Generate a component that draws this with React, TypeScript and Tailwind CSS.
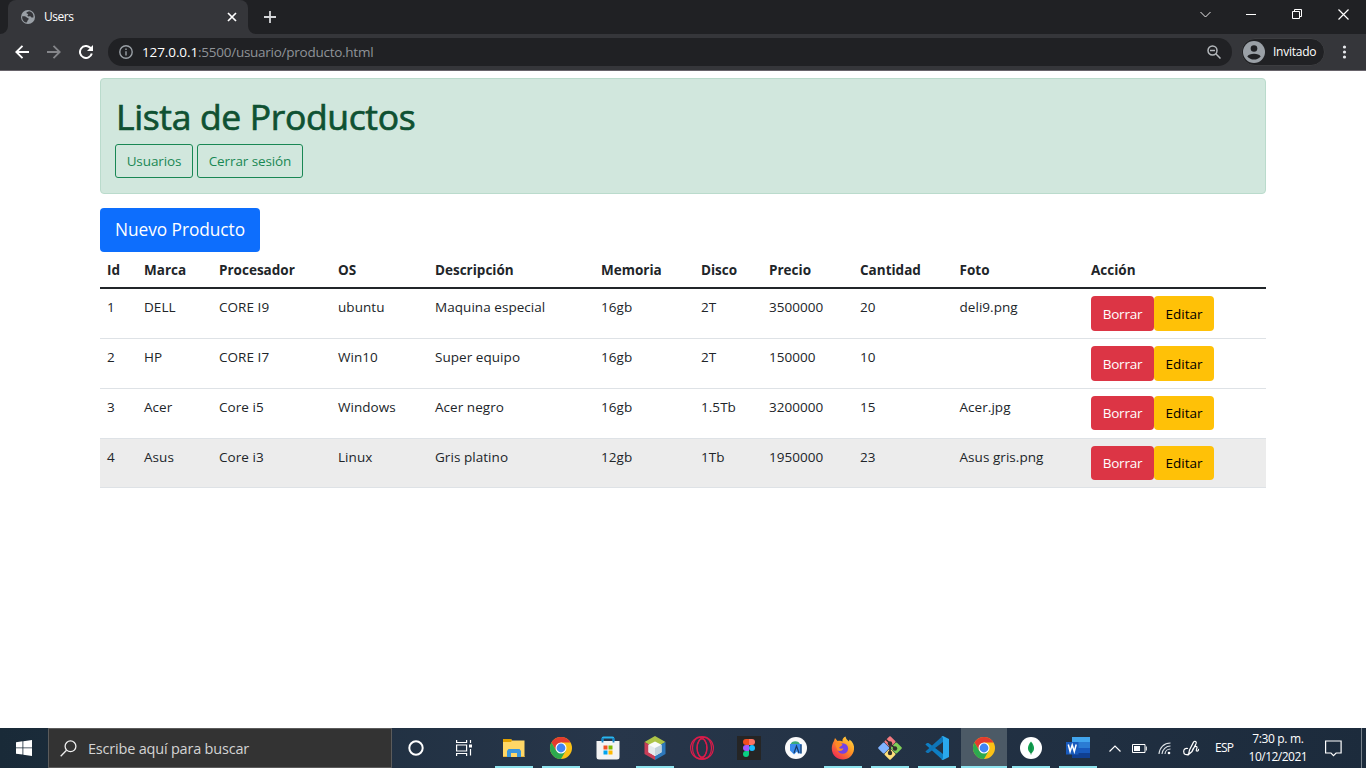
import type { ReactNode } from "react";

type Product = {
  id: number;
  brand: string;
  cpu: string;
  os: string;
  description: string;
  memory: string;
  disk: string;
  price: string;
  quantity: string;
  photo: string;
  row: string;
  button: string;
};

const products: Product[] = [
  { id: 1, brand: "DELL", cpu: "CORE I9", os: "ubuntu", description: "Maquina especial", memory: "16gb", disk: "2T", price: "3500000", quantity: "20", photo: "deli9.png", row: "h-[50px]", button: "h-[35px] pt-px" },
  { id: 2, brand: "HP", cpu: "CORE I7", os: "Win10", description: "Super equipo", memory: "16gb", disk: "2T", price: "150000", quantity: "10", photo: "", row: "h-[50px]", button: "h-[35px] pt-px" },
  { id: 3, brand: "Acer", cpu: "Core i5", os: "Windows", description: "Acer negro", memory: "16gb", disk: "1.5Tb", price: "3200000", quantity: "15", photo: "Acer.jpg", row: "h-[50px]", button: "h-[34px]" },
  { id: 4, brand: "Asus", cpu: "Core i3", os: "Linux", description: "Gris platino", memory: "12gb", disk: "1Tb", price: "1950000", quantity: "23", photo: "Asus gris.png", row: "h-[49px] bg-[#ececec]", button: "h-[34px]" },
];

const headings = ["Id", "Marca", "Procesador", "OS", "Descripción", "Memoria", "Disco", "Precio", "Cantidad", "Foto", "Acción"];

const columns = "grid grid-cols-[37px_75px_119px_97px_166px_100px_68px_91px_99.5px_131.5px_182px]";

function BrowserTabs() {
  return (
    <div className="flex h-[34px] bg-[#202124] text-white">
      <svg className="mt-[26px] size-2 shrink-0" viewBox="0 0 8 8" fill="#35363a">
        <path d="M8 0v8H0a8 8 0 0 0 8-8z" />
      </svg>
      <div className="flex h-[34px] w-[240px] items-center rounded-t-lg bg-[#35363a] pl-3 pr-[11px]">
        <svg className="size-4" viewBox="0 0 16 16">
          <circle cx="8" cy="8" r="7" fill="#9aa0a6" />
          <path d="M2.200 7.300c1.300-.1 2.300-.2 3.300.3 1.100.5.9 1.100 2.100 1.300 1.400.2 1.400 1 .6 1.900-.7.800-.6 1.400-1.300 2.300-.6.400-.6.700-1.200.5C3 12.600 1.800 9.800 2.200 7.300zM9 2.300c-1.300.6-3 1-2.500 1.900.4.700 1.700.3 1.700 1.100 0 .8-1.300 1-.6 1.700.9.900 2.500-.2 3.200.7.600.8 1.200 1 2.600.7C14 5.400 12 2.700 9 2.300z" fill="#35363a" />
        </svg>
        <span className="ml-2 text-[12px] tracking-[-0.45px]">Users</span>
        <svg className="ml-auto size-[10px]" viewBox="0 0 10 10" stroke="#fff" strokeWidth="1.7">
          <path d="M1 1l8 8M9 1l-8 8" />
        </svg>
      </div>
      <svg className="mt-[26px] size-2 shrink-0" viewBox="0 0 8 8" fill="#35363a">
        <path d="M0 0v8h8a8 8 0 0 1-8-8z" />
      </svg>
      <svg className="ml-2 mt-[11px] size-3" viewBox="0 0 12 12" stroke="#d5d7da" strokeWidth="1.8">
        <path d="M6 0v12M0 6h12" />
      </svg>
      <div className="ml-auto flex h-7 items-center">
        <svg className="mr-[35px] h-[7px] w-[11px]" viewBox="0 0 11 7" fill="none" stroke="#e8e8e8" strokeWidth="1">
          <path d="M.5 1l5 5 5-5" />
        </svg>
        <svg className="mr-9 h-px w-[10px]" viewBox="0 0 10 1"><rect width="10" height="1" fill="#fff" /></svg>
        <svg className="mr-9 size-[10px]" viewBox="0 0 10 10" fill="none" stroke="#fff">
          <path d="M.5 2.500h7v7h-7zM2.500 2.500v-2h7v7h-2" />
        </svg>
        <svg className="mr-[17px] size-[11px]" viewBox="0 0 11 11" stroke="#fff" strokeWidth="1.2">
          <path d="M.5.5l10 10M10.500.5l-10 10" />
        </svg>
      </div>
    </div>
  );
}

function BrowserToolbar() {
  return (
    <div className="flex h-[37px] items-center border-b border-[#67636a] bg-[#35363a]">
      <svg className="ml-[15px] size-[14px]" viewBox="0 0 14 14" fill="none" stroke="#fff" strokeWidth="1.9">
        <path d="M14 7H1.500M7.500 .8L1.300 7l6.200 6.200" />
      </svg>
      <svg className="ml-[18px] size-[14px]" viewBox="0 0 14 14" fill="none" stroke="#85868a" strokeWidth="1.8">
        <path d="M0 7h12.500M6.500.8L12.700 7l-6.200 6.200" />
      </svg>
      <svg className="ml-[18px] size-[14px]" viewBox="0 0 14 14" fill="none">
        <path d="M12.800 8.500A6 6 0 1 1 11.300 2.800L12.500 4" stroke="#fff" strokeWidth="2" />
        <path d="M14 0v6H8z" fill="#fff" />
      </svg>
      <div className="ml-[15px] flex h-7 w-[1124px] items-center rounded-full bg-[#202124] pl-[11px] pr-[11px]">
        <svg className="size-[14px]" viewBox="0 0 14 14" fill="none" stroke="#9aa0a6" strokeWidth="1.4">
          <circle cx="7" cy="7" r="6.200" />
          <path d="M7 6.300v4.200M7 3.500v1.600" />
        </svg>
        <span className="ml-[9px] text-[13.5px] tracking-[-0.26px] text-[#8f9398]">
          <span className="tracking-[-0.1px] text-white">127.0.0.1</span>:5500/usuario/producto.html
        </span>
        <svg className="ml-auto size-[14px]" viewBox="0 0 14 14" fill="none" stroke="#b4b8bc" strokeWidth="1.5">
          <circle cx="5.500" cy="5.500" r="4.500" />
          <path d="M3 5.500h5M8.800 8.800l4.700 4.700" />
        </svg>
      </div>
      <div className="ml-[9px] flex h-7 w-[84px] items-center rounded-full border border-[#3c3d40] bg-[#202124] pl-px text-[12px] text-white">
        <svg className="size-[22px] shrink-0" viewBox="0 0 22 22">
          <circle cx="11" cy="11" r="11" fill="#9aa0a6" />
          <circle cx="11" cy="7.500" r="3.300" fill="#202124" />
          <path d="M4.300 15.500C6 11.800 16 11.800 17.700 15.500 14.500 19.600 7.500 19.600 4.300 15.500z" fill="#202124" />
        </svg>
        <span className="ml-2 tracking-[-0.25px]">Invitado</span>
      </div>
      <svg className="ml-[17px] h-[14px] w-[5px]" viewBox="0 0 5 14" fill="#e8eaed">
        <circle cx="2.500" cy="2" r="1.600" /><circle cx="2.500" cy="7" r="1.600" /><circle cx="2.500" cy="12" r="1.600" />
      </svg>
    </div>
  );
}

function ProductPage() {
  return (
    <main className="flex h-[657px] flex-col bg-white px-[100px] pt-[7px] text-[#212529]">
      <div className="h-[116px] w-[1166px] rounded-[4px] border border-[#badbcc] bg-[#d1e7dd] px-[14px]">
        <h1 className="pl-px pt-[16px] text-[35.5px] font-medium leading-[42px] tracking-[-0.35px] text-[#0f5132] [-webkit-text-stroke:0.7px_#0f5132]">Lista de Productos</h1>
        <div className="mt-[7px] flex gap-1 text-[13.5px] text-[#198754]">
          <button className="h-[34px] w-[78px] rounded-[3px] border border-[#198754] pt-px tracking-[-0.1px]">Usuarios</button>
          <button className="h-[34px] w-[106px] rounded-[3px] border border-[#198754] pt-px tracking-[-0.1px]">Cerrar sesión</button>
        </div>
      </div>
      <button className="mt-[14px] h-[44px] w-[160px] shrink-0 rounded-[4px] bg-[#0d6efd] pb-px text-[17.3px] tracking-[-0.05px] text-white">Nuevo Producto</button>
      <div className="w-[1166px] text-[13.5px]">
        <div className={`${columns} h-[37px] border-b-2 border-[#212529] font-bold`}>
          {headings.map((h) => (
            <div key={h} className="pl-[7px] pt-[8px] leading-[21px]">{h}</div>
          ))}
        </div>
        {products.map((p) => (
          <div key={p.id} className={`${columns} ${p.row} border-b border-[#dee2e6]`}>
            {[p.id, p.brand, p.cpu, p.os, p.description, p.memory, p.disk, p.price, p.quantity, p.photo].map((value, i) => (
              <div key={i} className="pl-[7px] pt-[8px] leading-[21px] tracking-[0.05px]">{value}</div>
            ))}
            <div className="flex pl-[7px] pt-[7px]">
              <button className={`${p.button} w-[63px] rounded-[4px] bg-[#dc3545] tracking-[-0.2px] text-white`}>Borrar</button>
              <button className={`${p.button} w-[60px] rounded-[4px] bg-[#ffc107] text-black`}>Editar</button>
            </div>
          </div>
        ))}
      </div>
    </main>
  );
}

function ChromeIcon() {
  return (
    <svg className="size-6" viewBox="0 0 24 24">
      <circle cx="12" cy="12" r="11" fill="#fbc116" />
      <path d="M2.470 6.500A11 11 0 0 1 21.530 6.500L12 6.500 7.240 14.750z" fill="#e33b2e" />
      <path d="M2.470 6.500A11 11 0 0 0 12 23l4.760-8.250H7.240z" fill="#2da94f" />
      <circle cx="12" cy="12" r="5.500" fill="#fff" />
      <circle cx="12" cy="12" r="4.400" fill="#4285f4" />
    </svg>
  );
}

function ExplorerIcon() {
  return (
    <svg className="size-6" viewBox="0 0 24 24">
      <path d="M1 3h8l1 1.500h12.500V21H1z" fill="#ffd766" />
      <path d="M1 3h8l1 1.500L9 6H1z" fill="#e2a100" />
      <path d="M5 21v-6l1.500-2h11l1.500 2v6h-4v-4H9v4z" fill="#3a96dd" />
      <path d="M1 20h4v1H1zM19 20h3.500v1H19z" fill="#eab63d" />
    </svg>
  );
}

function StoreIcon() {
  return (
    <svg className="size-6" viewBox="0 0 24 24">
      <path d="M6.500 6V2.500q0-1 1-1h9q1 0 1 1V6" fill="none" stroke="#29b6f0" strokeWidth="1.8" />
      <path d="M.5 5h23v16q0 2.500-2.500 2.500H3Q.5 23.500.5 21z" fill="#f3f3f3" />
      <path d="M6.500 2v4.500M17.500 2v4.500" stroke="#1687c9" strokeWidth="1.8" />
      <path d="M7.500 9.500h4v4h-4z" fill="#f25022" /><path d="M12.500 9.500h4v4h-4z" fill="#7fba00" />
      <path d="M7.500 14.500h4v4h-4z" fill="#00a4ef" /><path d="M12.500 14.500h4v4h-4z" fill="#ffb900" />
    </svg>
  );
}

function NetBeansIcon() {
  return (
    <svg className="size-6" viewBox="0 0 24 24">
      <path d="M12 0l10.500 6L12 12 1.500 6z" fill="#adc447" />
      <path d="M1.500 6L12 12v12L1.500 18z" fill="#c83d57" />
      <path d="M22.500 6L12 12v12l10.500-6z" fill="#2d78bc" />
      <path d="M12 5.500l6.500 3.300v7.500L12 20l-6.500-3.700V8.800z" fill="#f9fbfb" />
      <path d="M12 12l6.500-3.200v7.500L12 20z" fill="#c3d3dc" /><path d="M12 12L5.500 8.800v7.500L12 20z" fill="#e4eaed" />
    </svg>
  );
}

function OperaIcon() {
  return (
    <svg className="size-6" viewBox="0 0 24 24" fill="none" stroke="#d91c4a" strokeWidth="1.2">
      <ellipse cx="12" cy="12" rx="11.400" ry="11.300" />
      <ellipse cx="9.800" cy="12" rx="7.300" ry="10.700" />
      <ellipse cx="14.200" cy="12" rx="7.300" ry="10.700" />
      <ellipse cx="12" cy="12" rx="4.800" ry="9" />
    </svg>
  );
}

function FigmaIcon() {
  return (
    <svg className="size-6" viewBox="0 0 24 24">
      <path d="M0 0h24v24H0z" fill="#252525" />
      <path d="M12 3H9a3 3 0 0 0 0 6h3z" fill="#f24e1e" /><path d="M12 3h3a3 3 0 0 1 0 6h-3z" fill="#ff7262" />
      <path d="M12 9H9a3 3 0 0 0 0 6h3z" fill="#a259ff" /><circle cx="15" cy="12" r="3" fill="#1abcfe" />
      <path d="M12 15H9a3 3 0 1 0 3 3z" fill="#0acf83" />
    </svg>
  );
}

function AndroidStudioIcon() {
  return (
    <svg className="size-6" viewBox="0 0 24 24">
      <circle cx="12" cy="12" r="11" fill="#fafafa" />
      <path d="M6.500 8.500c.5-4.500 9-4.500 9.500 0z" fill="#3aaa7b" />
      <path d="M6 8h11.500v9.500H14l-1-2-3 3-4-4z" fill="#3c8ceb" />
      <path d="M10 17l2.500-7 2.500 7M17 8.500v9" fill="none" stroke="#173b66" strokeWidth="1.2" />
    </svg>
  );
}

function FirefoxIcon() {
  return (
    <svg className="size-6" viewBox="0 0 24 24">
      <defs>
        <linearGradient id="fox" x1="1" y1="0" x2="0.2" y2="1">
          <stop offset="0" stopColor="#ffe44d" /><stop offset=".45" stopColor="#ff9a22" /><stop offset="1" stopColor="#ef2455" />
        </linearGradient>
      </defs>
      <path d="M3 5l1-3 2.500 3c2-.5 4 0 5 .5C11 3 12.500 1.500 14.500.5c.5 2.500 2 3.500 3.500 5l.5-2C22 6 23.500 9.500 23 13.500 22.300 19.500 17.500 23.500 12 23.500S1 19.500.8 13C.7 10 1.500 7 3 5z" fill="url(#fox)" />
      <circle cx="11.800" cy="12.500" r="5.300" fill="#7542e5" />
      <path d="M4 8c2-2 5-1.500 7.500.5-.5 2-3 1.500-3.500 3.500 1.500 1 3 .5 4.500.5-1 2.500-4 3-6 2z" fill="#ff8a25" />
    </svg>
  );
}

function GitIcon() {
  return (
    <svg className="size-6" viewBox="0 0 24 24">
      <g strokeLinejoin="round" strokeWidth="2">
        <path d="M12 1.200l4.500 4.500L12 10.200 7.500 5.700z" fill="#f47a80" stroke="#f47a80" />
        <path d="M5.700 7.500l4.500 4.500-4.500 4.500L1.200 12z" fill="#80b3ff" stroke="#80b3ff" />
        <path d="M18.300 7.500l4.500 4.500-4.500 4.500-4.500-4.500z" fill="#80cf58" stroke="#80cf58" />
        <path d="M12 13.800l4.500 4.500-4.500 4.500-4.500-4.500z" fill="#ffe07a" stroke="#ffe07a" />
      </g>
      <path d="M8 3.500l4 4V17M12 7.500l5 5" fill="none" stroke="#302d2d" strokeWidth="1.7" />
      <circle cx="12" cy="7.500" r="2.200" fill="#302d2d" /><circle cx="12" cy="17" r="2.200" fill="#302d2d" /><circle cx="17" cy="12.500" r="2.200" fill="#302d2d" />
    </svg>
  );
}

function CodeIcon() {
  return (
    <svg className="size-6" viewBox="0 0 24 24">
      <path d="M.4 8.500L2 7h1.500L18 18v5.500L16.500 23z" fill="#0e7fc4" />
      <path d="M.4 15.500L2 17h1.500L18 6V.5L16.500 1z" fill="#0f75b8" />
      <path d="M16 .8L18 0l6 3v18l-6 3-2-.8q2 .4 2-1.700v-19q0-2.100-2-1.700z" fill="#2aa8ed" />
    </svg>
  );
}

function MongoIcon() {
  return (
    <svg className="size-6" viewBox="0 0 24 24">
      <circle cx="12" cy="12" r="11" fill="#fff" />
      <path d="M12 5.500c4.300 5 3.800 9.500 0 12-3.800-2.500-4.300-7 0-12z" fill="#13a150" />
      <path d="M12 7v11.500" stroke="#08733a" strokeWidth=".7" />
    </svg>
  );
}

function WordIcon() {
  return (
    <svg className="size-6" viewBox="0 0 24 24">
      <path d="M6 1h18v6H6z" fill="#41a5ee" /><path d="M6 6h18v6H6z" fill="#2b7cd3" />
      <path d="M6 12h18v5H6z" fill="#185abd" /><path d="M6 17h18v5H6z" fill="#103f91" />
      <path d="M0 6h12.500v12.500H0z" fill="#185abd" />
      <path d="M2.300 8.500l1.800 7 2.100-6.500 2.100 6.500 1.900-7" fill="none" stroke="#fff" strokeWidth="1.5" />
    </svg>
  );
}

type App = { name: string; icon: ReactNode; open?: boolean; active?: boolean };

const apps: App[] = [
  { name: "explorer", icon: <ExplorerIcon />, open: true },
  { name: "chrome", icon: <ChromeIcon />, open: true },
  { name: "store", icon: <StoreIcon /> },
  { name: "netbeans", icon: <NetBeansIcon />, open: true },
  { name: "opera", icon: <OperaIcon /> },
  { name: "figma", icon: <FigmaIcon /> },
  { name: "android", icon: <AndroidStudioIcon /> },
  { name: "firefox", icon: <FirefoxIcon />, open: true },
  { name: "git", icon: <GitIcon />, open: true },
  { name: "code", icon: <CodeIcon />, open: true },
  { name: "chrome-guest", icon: <ChromeIcon />, open: true, active: true },
  { name: "mongo", icon: <MongoIcon />, open: true },
  { name: "word", icon: <WordIcon />, open: true },
];

function Taskbar() {
  return (
    <footer className="flex h-10 bg-linear-to-r from-[#192a38] via-[#27364a] via-45% to-[#1c2b3c] text-white">
      <div className="flex w-12 items-center justify-center">
        <svg className="size-4" viewBox="0 0 16 16" fill="#fff">
          <path d="M0 2.200L6.500 1.300v6.200H0zM7.300 1.200L16 0v7.500H7.300zM0 8.300h6.500v6.300L0 13.700zM7.300 8.300H16V16l-8.700-1.300z" />
        </svg>
      </div>
      <div className="flex w-[344px] items-center border border-[#5b5b5b] bg-[#333333] pl-[11px]">
        <svg className="size-[17px]" viewBox="0 0 17 17" fill="none" stroke="#eee" strokeWidth="1.3">
          <circle cx="10.500" cy="6.300" r="5.400" /><path d="M6.500 10.200L.7 16.200" />
        </svg>
        <span className="ml-[11px] pt-px text-[14.5px] tracking-[-0.2px] text-[#d4d4d4]">Escribe aquí para buscar</span>
      </div>
      <div className="flex w-12 items-center justify-center">
        <svg className="size-4" viewBox="0 0 16 16" fill="none" stroke="#fff" strokeWidth="2"><circle cx="8" cy="8" r="6.700" /></svg>
      </div>
      <div className="flex w-[51px] items-center pl-4">
        <svg className="size-4" viewBox="0 0 16 16" fill="none" stroke="#fff" strokeWidth="1.2">
          <path d="M.6 0v2.500h10V0M.6 16v-2.500h10V16M.6 5h10v6h-10zM14.500 0v3M14.500 9v6.500" /><path d="M13 4.500h3v3h-3z" fill="#fff" stroke="none" />
        </svg>
      </div>
      {apps.map((app) => (
        <div key={app.name} className={`flex w-[47px] flex-col items-start ${app.active ? "bg-linear-to-r from-[#4c5a66] from-[46px] to-transparent to-[46px]" : ""}`}>
          <div className="flex h-[38px] items-center pl-[11px] pt-px">{app.icon}</div>
          {app.open && <div className={`h-[2px] bg-[#8ee3ee] ${app.active ? "w-[46px]" : "ml-1 w-[38px]"}`} />}
        </div>
      ))}
      <div className="flex flex-1 items-center pl-[7px]">
        <svg className="h-[7px] w-3" viewBox="0 0 12 7" fill="none" stroke="#fff" strokeWidth="1.2"><path d="M.5 6.500L6 1l5.500 5.500" /></svg>
        <svg className="ml-[11px] h-[9px] w-[15px]" viewBox="0 0 15 9" fill="none" stroke="#fff">
          <path d="M.5.5h12.500v8H.5zM14.300 2.500v4" /><path d="M2 2h6v5H2z" fill="#fff" stroke="none" />
        </svg>
        <svg className="ml-[11px] size-[13px]" viewBox="0 0 13 13" fill="none" stroke="#dfe4e8" strokeWidth="1.1">
          <path d="M1 12C1.500 5.500 6 1 12.500 1M4 12c.3-4.500 4-8 8.500-8M7 12c.2-2.800 2.500-5 5.500-5" /><circle cx="11" cy="11" r="1.300" fill="#fff" stroke="none" />
        </svg>
        <svg className="ml-3 h-[17px] w-[17px]" viewBox="0 0 17 17" fill="none" stroke="#fff" strokeWidth="1.2">
          <path d="M5.500 14.500L6.500 10 10.500 2.200q1.500-1.700 2.500-.3.500.700 0 1.800L9 11.500zM5 8.500C2 7.800.7 9.500.7 11.500c0 2.700 2 4 4.300 2.700M9 11.500c1-2.800 3-5.500 4.500-5 1.700.6-1.300 4 .2 4.500 1.300.3 2-.8 1.800-2.200" />
        </svg>
        <span className="ml-[15px] text-[12px] tracking-[-0.7px]">ESP</span>
        <div className="ml-3 w-[65px] text-center text-[12px] leading-[18px] tracking-[-0.5px]">
          <div className="tracking-[-0.35px]">7:30 p. m.</div>
          <div>10/12/2021</div>
        </div>
        <svg className="ml-auto mr-[19px] size-[17px]" viewBox="0 0 17 17" fill="none" stroke="#fff" strokeWidth="1.2">
          <path d="M.6 1h15.500v12h-5L8.500 15.600 6 13H.6z" />
        </svg>
        <div className="mr-1 h-10 w-px bg-[#77818b]" />
      </div>
    </footer>
  );
}

export default function App() {
  return (
    <div className="h-[768px] w-[1366px] overflow-hidden font-['Open_Sans','Noto_Sans',sans-serif]">
      <BrowserTabs />
      <BrowserToolbar />
      <ProductPage />
      <Taskbar />
    </div>
  );
}
